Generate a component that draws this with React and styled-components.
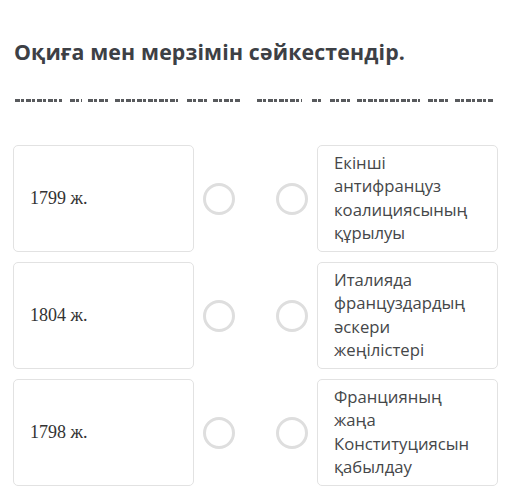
import React from 'react';
import styled, { createGlobalStyle } from 'styled-components';

const GlobalStyle = createGlobalStyle`
  body {
    margin: 0;
    background: #ffffff;
    font-family: "Open Sans", "Noto Sans", sans-serif;
  }
`;

const Page = styled.div`
  width: 526px;
  padding: 38px 0 0 13px;
  box-sizing: border-box;
`;

const Title = styled.h1`
  margin: 0 0 0 1px;
  font-size: 21.3px;
  line-height: 28px;
  font-weight: 700;
  color: #3d4045;
  letter-spacing: 0.15px;
`;

const Redacted = styled.div`
  display: flex;
  align-items: center;
  height: 3px;
  margin: 33px 0 43px 2px;
`;

const Word = styled.span`
  display: block;
  height: 3px;
  width: ${p => p.$w}px;
  margin-left: ${p => p.$gap}px;
  background: repeating-linear-gradient(90deg, #46484b 0 5px, transparent 5px 6px, #46484b 6px 9px, transparent 9px 11px);
  opacity: 0.9;
`;

const Rows = styled.div`
  display: flex;
  flex-direction: column;
  gap: 10px;
`;

const Row = styled.div`
  display: grid;
  grid-template-columns: 181px 123px 181px;
  height: 107px;
`;

const Card = styled.div`
  border: 1px solid #e2e2e2;
  border-radius: 5px;
  box-sizing: border-box;
  background: #fff;
`;

const DateCard = styled(Card)`
  display: flex;
  align-items: center;
  padding: 0 16px;
  font-family: "Liberation Serif", "DejaVu Serif", serif;
  font-size: 18px;
  color: #333;
`;

const EventCard = styled(Card)`
  padding: 5px 10px 0 16px;
  font-size: 16.7px;
  line-height: 23.4px;
  color: #454749;
`;

const Pins = styled.div`
  display: flex;
  align-items: center;
  justify-content: space-between;
  padding: 0 9px;
`;

const Pin = styled.span`
  width: 32px;
  height: 32px;
  box-sizing: border-box;
  border: 3px solid #dedede;
  border-radius: 50%;
`;

const wordsA = [
  [47, 0], [12, 8], [20, 6], [63, 7], [21, 9], [27, 5],
];
const wordsB = [
  [45, 17], [11, 10], [20, 7], [63, 7], [22, 8], [38, 5],
];

const rows = [
  { date: '1799 ж.', event: ['Екінші', 'антифранцуз', 'коалициясының', 'құрылуы'] },
  { date: '1804 ж.', event: ['Италияда', 'француздардың', 'әскери', 'жеңілістері'] },
  { date: '1798 ж.', event: ['Францияның', 'жаңа', 'Конституциясын', 'қабылдау'] },
];

export default function App() {
  return (
    <Page>
      <GlobalStyle />
      <Title>Оқиға мен мерзімін сәйкестендір.</Title>
      <Redacted>
        {[...wordsA, ...wordsB].map(([w, gap], i) => (
          <Word key={i} $w={w} $gap={gap} />
        ))}
      </Redacted>
      <Rows>
        {rows.map((r, i) => (
          <Row key={i}>
            <DateCard>{r.date}</DateCard>
            <Pins>
              <Pin />
              <Pin />
            </Pins>
            <EventCard>
              {r.event.map((line, j) => (
                <div key={j}>{line}</div>
              ))}
            </EventCard>
          </Row>
        ))}
      </Rows>
    </Page>
  );
}
